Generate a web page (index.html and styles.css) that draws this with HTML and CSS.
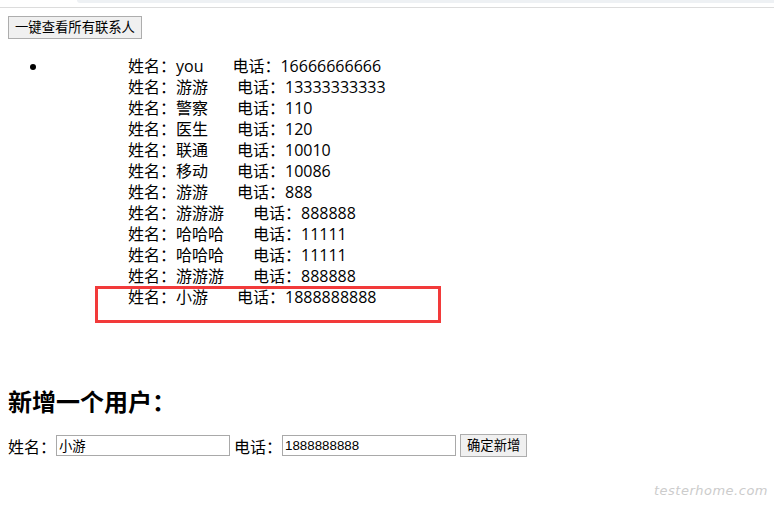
FILE: index.html
```html
<!DOCTYPE html>
<html lang="zh-CN">
<head>
    <meta charset="UTF-8">
    <meta name="viewport" content="width=device-width, initial-scale=1.0">
    <title>通讯录</title>
    <link rel="stylesheet" href="styles.css">
</head>
<body>
    <div class="chrome">
        <div class="tab-strip"></div>
    </div>
    <div class="page">
        <div class="toolbar">
            <button class="btn" id="showAll">一键查看所有联系人</button>
        </div>
        <ul class="contacts">
            <li>
                <div class="rows">
                    <div class="row"><span class="name">姓名：you</span><span class="phone">电话：16666666666</span></div>
                    <div class="row"><span class="name">姓名：游游</span><span class="phone">电话：13333333333</span></div>
                    <div class="row"><span class="name">姓名：警察</span><span class="phone">电话：110</span></div>
                    <div class="row"><span class="name">姓名：医生</span><span class="phone">电话：120</span></div>
                    <div class="row"><span class="name">姓名：联通</span><span class="phone">电话：10010</span></div>
                    <div class="row"><span class="name">姓名：移动</span><span class="phone">电话：10086</span></div>
                    <div class="row"><span class="name">姓名：游游</span><span class="phone">电话：888</span></div>
                    <div class="row"><span class="name">姓名：游游游</span><span class="phone">电话：888888</span></div>
                    <div class="row"><span class="name">姓名：哈哈哈</span><span class="phone">电话：11111</span></div>
                    <div class="row"><span class="name">姓名：哈哈哈</span><span class="phone">电话：11111</span></div>
                    <div class="row"><span class="name">姓名：游游游</span><span class="phone">电话：888888</span></div>
                    <div class="row"><span class="name">姓名：小游</span><span class="phone">电话：1888888888</span></div>
                </div>
            </li>
        </ul>
        <div class="highlight"></div>

        <h2 class="add-title">新增一个用户：</h2>
        <div class="add-form">
            <label>姓名：</label><input class="field" type="text" value="小游">
            <label class="gap">电话：</label><input class="field" type="text" value="1888888888">
            <button class="btn gap">确定新增</button>
        </div>
    </div>
    <div class="watermark">testerhome.com</div>
</body>
</html>
```

FILE: styles.css
```css
body {
    margin: 0;
    background-color: #ffffff;
    color: #000000;
    font-family: "Open Sans", "Noto Sans CJK SC", sans-serif;
    font-size: 16px;
    position: relative;
    height: 512px;
    overflow: hidden;
}
.chrome {
    height: 7px;
    border-bottom: 1px solid #dcdcdc;
}
.tab-strip {
    height: 3px;
    margin-left: 77px;
    background: #eef1f4;
    border-bottom-left-radius: 4px;
}
.page {
    padding: 8px;
}
.toolbar {
    display: flex;
}
.btn {
    font-family: "Liberation Sans", "Noto Sans CJK SC", sans-serif;
    font-size: 13.33px;
    line-height: 19px;
    height: 23px;
    padding: 0 6px;
    color: #000000;
    background: #f0f0f0;
    border: 1px solid #adadad;
    border-radius: 0;
}
.contacts {
    margin: 16px 0;
    padding-left: 40px;
}
.rows {
    margin-left: 80px;
}
.row {
    line-height: 21px;
    height: 21px;
}
.phone {
    margin-left: 29px;
}
.highlight {
    position: absolute;
    left: 95px;
    top: 286px;
    width: 346px;
    height: 37px;
    box-sizing: border-box;
    border: 3px solid #f23a3a;
}
.add-title {
    font-family: "Noto Sans CJK SC", sans-serif;
    font-size: 24px;
    line-height: 32px;
    font-weight: bold;
    margin: 77px 0 17px;
}
.add-form {
    display: flex;
    align-items: center;
    height: 23px;
    font-family: "Noto Sans CJK SC", sans-serif;
}
.gap {
    margin-left: 4px;
}
.field {
    box-sizing: border-box;
    width: 174px;
    height: 21px;
    padding: 1px 2px;
    border: 1px solid #a9a9a9;
    font-family: "Liberation Sans", "Noto Sans CJK SC", sans-serif;
    font-size: 13.33px;
}
.watermark {
    position: absolute;
    right: 6px;
    bottom: 14px;
    color: #cccccc;
    font-family: "DejaVu Sans", sans-serif;
    font-style: italic;
    font-weight: 300;
    font-size: 13px;
    letter-spacing: 0.5px;
}
```
